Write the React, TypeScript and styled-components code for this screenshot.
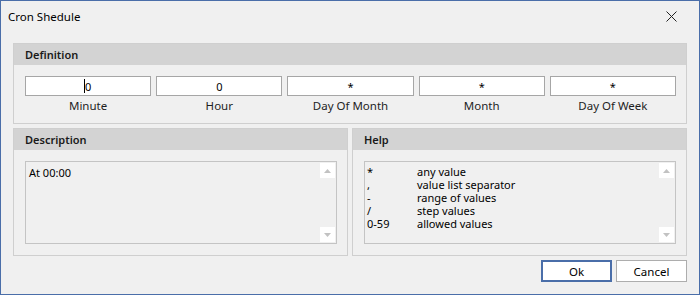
import React from "react";
import styled, { createGlobalStyle } from "styled-components";

const GlobalStyle = createGlobalStyle`
  html, body {
    margin: 0;
    padding: 0;
    background: #f0f0f0;
  }
  * {
    box-sizing: border-box;
  }
`;

const Window = styled.div`
  width: 700px;
  height: 295px;
  border: 1px solid #4a6ea9;
  background: #f0f0f0;
  display: flex;
  flex-direction: column;
  font-family: "Segoe UI", "Noto Sans", sans-serif;
  font-size: 11px;
  color: #000;
`;

const TitleBar = styled.div`
  height: 31px;
  display: flex;
  align-items: center;
  justify-content: space-between;
  padding: 0 22px 0 7px;
  flex-shrink: 0;
`;

const Title = styled.span`
  font-size: 11.5px;
  color: #000;
`;

const CloseButton = styled.div`
  width: 12px;
  height: 12px;
  display: flex;
  align-items: center;
  justify-content: center;
`;

const Content = styled.div`
  flex: 1;
  display: flex;
  flex-direction: column;
  gap: 4px;
  padding: 11px 12px 12px 12px;
`;

const Group = styled.div`
  border: 1px solid #cfcfcf;
  display: flex;
  flex-direction: column;
`;

const GroupHeader = styled.div`
  height: 21px;
  background: #d3d3d3;
  display: flex;
  align-items: center;
  padding-left: 11px;
  font-weight: 600;
  color: #1a1a1a;
`;

const FieldsBody = styled.div`
  display: grid;
  grid-template-columns: repeat(5, 1fr);
  gap: 5px;
  padding: 11px 10px 9px 11px;
`;

const Field = styled.div`
  display: flex;
  flex-direction: column;
  align-items: center;
`;

const InputWrap = styled.div`
  position: relative;
  width: 100%;
`;

const FieldInput = styled.input`
  width: 100%;
  height: 20px;
  border: 1px solid #a6a6a6;
  background: #fff;
  text-align: center;
  font-family: inherit;
  font-size: 11px;
  color: #000;
  padding: 0;
  outline: none;
`;

const Caret = styled.span`
  position: absolute;
  left: 50%;
  top: 3px;
  width: 1px;
  height: 14px;
  margin-left: -4px;
  background: #000;
`;

const FieldLabel = styled.div`
  margin-top: 2px;
  line-height: 16px;
  font-size: 11.5px;
  color: #1e1e1e;
`;

const BottomRow = styled.div`
  display: grid;
  grid-template-columns: 1fr 1fr;
  gap: 4px;
  height: 128px;
`;

const PanelBody = styled.div`
  flex: 1;
  padding: 11px 10px 11px 11px;
  display: flex;
`;

const TextBox = styled.div`
  flex: 1;
  border: 1px solid #c4c4c4;
  display: flex;
`;

const TextContent = styled.div<{ $pad: string }>`
  flex: 1;
  padding: ${(p) => p.$pad};
  line-height: 13px;
`;

const ScrollBar = styled.div`
  width: 17px;
  display: flex;
  flex-direction: column;
  justify-content: space-between;
  padding: 1px;
`;

const ScrollButton = styled.div`
  width: 15px;
  height: 15px;
  background: #fff;
  display: flex;
  align-items: center;
  justify-content: center;
`;

const HelpGrid = styled.div`
  display: grid;
  grid-template-columns: 50px 1fr;
  line-height: 13px;
`;

const ButtonRow = styled.div`
  display: flex;
  justify-content: flex-end;
  gap: 4px;
  height: 22px;
`;

const DialogButton = styled.button<{ $primary?: boolean }>`
  width: 71px;
  height: 22px;
  background: #fff;
  border: ${(p) => (p.$primary ? "2px solid #4a6ea9" : "1px solid #adadad")};
  font-family: inherit;
  font-size: 11.5px;
  color: #000;
  padding: 0;
`;

const Arrow = ({ down }: { down?: boolean }) => (
  <svg width="7" height="4" viewBox="0 0 7 4">
    <path d={down ? "M0 0 L7 0 L3.5 4 Z" : "M0 4 L7 4 L3.5 0 Z"} fill="#c2c2c2" />
  </svg>
);

const Scroller = () => (
  <ScrollBar>
    <ScrollButton>
      <Arrow />
    </ScrollButton>
    <ScrollButton>
      <Arrow down />
    </ScrollButton>
  </ScrollBar>
);

const fields = [
  { label: "Minute", value: "0" },
  { label: "Hour", value: "0" },
  { label: "Day Of Month", value: "*" },
  { label: "Month", value: "*" },
  { label: "Day Of Week", value: "*" },
];

const help = [
  ["*", "any value"],
  [",", "value list separator"],
  ["-", "range of values"],
  ["/", "step values"],
  ["0-59", "allowed values"],
];

export default function App() {
  return (
    <>
      <GlobalStyle />
      <Window>
        <TitleBar>
          <Title>Cron Shedule</Title>
          <CloseButton>
            <svg width="11" height="11" viewBox="0 0 11 11">
              <path d="M0.5 0.5 L10.5 10.5 M10.5 0.5 L0.5 10.5" stroke="#222" strokeWidth="1" />
            </svg>
          </CloseButton>
        </TitleBar>
        <Content>
          <Group>
            <GroupHeader>Definition</GroupHeader>
            <FieldsBody>
              {fields.map((f, i) => (
                <Field key={f.label}>
                  <InputWrap>
                    <FieldInput value={f.value} readOnly />
                    {i === 0 && <Caret />}
                  </InputWrap>
                  <FieldLabel>{f.label}</FieldLabel>
                </Field>
              ))}
            </FieldsBody>
          </Group>
          <BottomRow>
            <Group>
              <GroupHeader>Description</GroupHeader>
              <PanelBody>
                <TextBox>
                  <TextContent $pad="4px 2px 0 3px">At 00:00</TextContent>
                  <Scroller />
                </TextBox>
              </PanelBody>
            </Group>
            <Group>
              <GroupHeader>Help</GroupHeader>
              <PanelBody>
                <TextBox>
                  <TextContent $pad="3px 2px 0 2px">
                    <HelpGrid>
                      {help.map(([k, v]) => (
                        <React.Fragment key={k}>
                          <span>{k}</span>
                          <span>{v}</span>
                        </React.Fragment>
                      ))}
                    </HelpGrid>
                  </TextContent>
                  <Scroller />
                </TextBox>
              </PanelBody>
            </Group>
          </BottomRow>
          <ButtonRow>
            <DialogButton $primary>Ok</DialogButton>
            <DialogButton>Cancel</DialogButton>
          </ButtonRow>
        </Content>
      </Window>
    </>
  );
}
